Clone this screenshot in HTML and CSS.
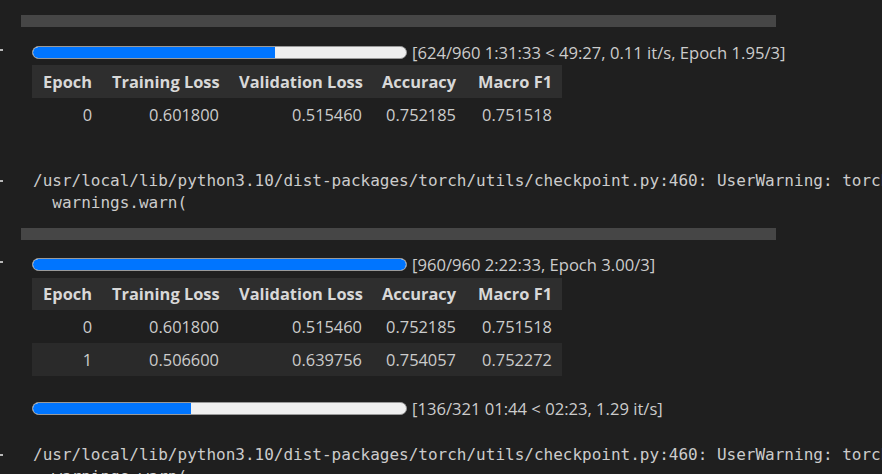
FILE: index.html
```html
<!DOCTYPE html>
<html>
<head>
<meta charset="utf-8">
<link rel="stylesheet" href="styles.css">
</head>
<body>
<div class="page">
  <div class="row mono-block first">
    <div class="gutter"></div>
    <pre class="mono">  warnings.warn(</pre>
  </div>
  <div class="hbar"></div>

  <div class="row prog-row">
    <div class="gutter"><span class="dot"></span></div>
    <div class="track"><div class="fill partial" style="width:65%"></div></div>
    <span class="prog-text">[624/960 1:31:33 &lt; 49:27, 0.11 it/s, Epoch 1.95/3]</span>
  </div>
  <div class="row table-row">
    <div class="gutter"></div>
    <table class="metrics">
      <colgroup>
        <col class="c1"><col class="c2"><col class="c3"><col class="c4"><col class="c5">
      </colgroup>
      <thead>
        <tr><th>Epoch</th><th>Training Loss</th><th>Validation Loss</th><th>Accuracy</th><th>Macro F1</th></tr>
      </thead>
      <tbody>
        <tr><td>0</td><td>0.601800</td><td>0.515460</td><td>0.752185</td><td>0.751518</td></tr>
      </tbody>
    </table>
  </div>

  <div class="row mono-block gap-a">
    <div class="gutter top"><span class="dot"></span></div>
    <pre class="mono">/usr/local/lib/python3.10/dist-packages/torch/utils/checkpoint.py:460: UserWarning: torch.utils.checkpoint: please pass in use_reentrant=True or use_reentrant=False explicitly.
  warnings.warn(</pre>
  </div>
  <div class="hbar"></div>

  <div class="row prog-row">
    <div class="gutter"><span class="dot"></span></div>
    <div class="track"><div class="fill" style="width:100%"></div></div>
    <span class="prog-text">[960/960 2:22:33, Epoch 3.00/3]</span>
  </div>
  <div class="row table-row">
    <div class="gutter"></div>
    <table class="metrics">
      <colgroup>
        <col class="c1"><col class="c2"><col class="c3"><col class="c4"><col class="c5">
      </colgroup>
      <thead>
        <tr><th>Epoch</th><th>Training Loss</th><th>Validation Loss</th><th>Accuracy</th><th>Macro F1</th></tr>
      </thead>
      <tbody>
        <tr><td>0</td><td>0.601800</td><td>0.515460</td><td>0.752185</td><td>0.751518</td></tr>
        <tr class="alt"><td>1</td><td>0.506600</td><td>0.639756</td><td>0.754057</td><td>0.752272</td></tr>
      </tbody>
    </table>
  </div>

  <div class="row prog-row gap-b">
    <div class="gutter"></div>
    <div class="track"><div class="fill partial" style="width:42.4%"></div></div>
    <span class="prog-text">[136/321 01:44 &lt; 02:23, 1.29 it/s]</span>
  </div>

  <div class="row mono-block gap-c">
    <div class="gutter top"><span class="dot"></span></div>
    <pre class="mono">/usr/local/lib/python3.10/dist-packages/torch/utils/checkpoint.py:460: UserWarning: torch.utils.checkpoint: please pass in use_reentrant=True or use_reentrant=False explicitly.
  warnings.warn(</pre>
  </div>
</div>
</body>
</html>
```

FILE: styles.css
```css
html, body {
  margin: 0;
  padding: 0;
  background: #1f1f1f;
  overflow: hidden;
}

.page {
  width: 882px;
  height: 474px;
  overflow: hidden;
  color: #cccccc;
}

.row {
  display: flex;
}

.gutter {
  width: 32px;
  flex: none;
  display: flex;
  align-items: center;
}

.gutter.top {
  align-items: flex-start;
  padding-top: 10px;
}

.dot {
  display: block;
  width: 3px;
  height: 2px;
  background: #b8b8b8;
}

.mono {
  margin: 0;
  font-family: "DejaVu Sans Mono", "Liberation Mono", monospace;
  font-size: 16px;
  line-height: 22px;
  color: #cccccc;
  white-space: pre;
  padding-left: 1px;
}

.first {
  margin-top: -21px;
}

.hbar {
  margin: 14px 0 0 21px;
  width: 755px;
  height: 12px;
  background: #464646;
}

.prog-row {
  height: 22px;
  align-items: center;
  margin-top: 14px;
}

.prog-row .gutter {
  height: 22px;
  align-items: center;
  padding-bottom: 5px;
  box-sizing: border-box;
}

.track {
  width: 375px;
  height: 13px;
  box-sizing: border-box;
  border: 1px solid #9a9a9a;
  border-radius: 7px;
  background: #efefef;
  overflow: hidden;
  flex: none;
}

.fill {
  height: 100%;
  background: #0075ff;
  border-radius: 6px;
}

.fill.partial {
  border-radius: 6px 0 0 6px;
}

.prog-text {
  margin-left: 5px;
  font-family: "Open Sans", "Noto Sans", sans-serif;
  font-size: 16.6px;
  color: #cccccc;
  white-space: nowrap;
}

.table-row {
  margin-top: 2px;
}

.metrics {
  border-collapse: collapse;
  table-layout: fixed;
  width: 530px;
  font-family: "Open Sans", "Noto Sans", sans-serif;
  font-size: 16.4px;
  color: #cccccc;
}

.c1 { width: 70px; }
.c2 { width: 127px; }
.c3 { width: 143px; }
.c4 { width: 94px; }
.c5 { width: 96px; }

.metrics th,
.metrics td {
  height: 32.8px;
  padding: 0 10px;
  text-align: right;
  white-space: nowrap;
  box-sizing: border-box;
}

.metrics th {
  font-weight: 700;
  color: #d8d8d8;
}

.metrics thead tr {
  background: #2e2e2e;
}

.metrics tr.alt {
  background: #2a2a2a;
}

.gap-a {
  margin-top: 39px;
}

.gap-b {
  margin-top: 22px;
}

.gap-c {
  margin-top: 24px;
}
```
